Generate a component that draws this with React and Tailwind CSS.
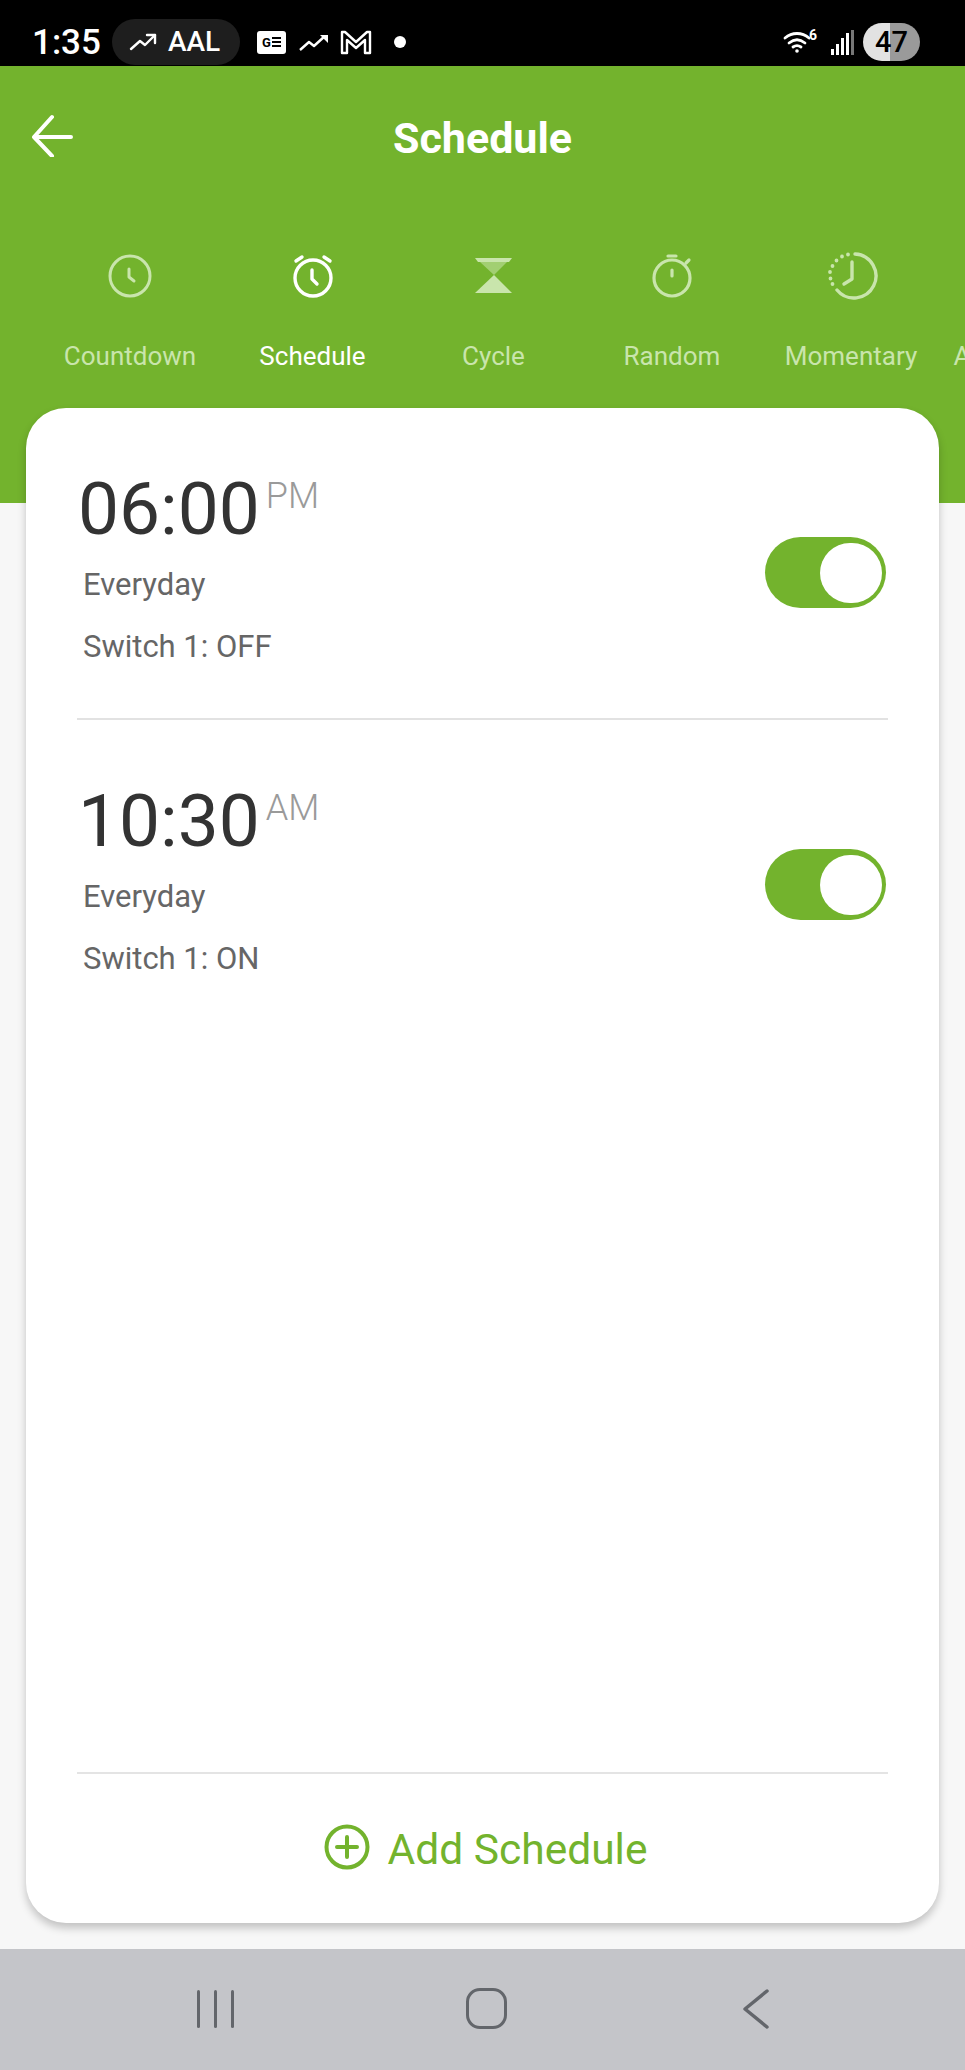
import React from 'react';

const FONT = { fontFamily: 'Roboto, "Noto Sans", sans-serif' };

const TABS = [
  { label: 'Countdown', w: 'w-[182px]', icon: 'clock' },
  { label: 'Schedule', w: 'w-[183px]', icon: 'alarm', active: true },
  { label: 'Cycle', w: 'w-[179px]', icon: 'hourglass' },
  { label: 'Random', w: 'w-[178px]', icon: 'stopwatch' },
  { label: 'Momentary', w: 'w-[180px]', icon: 'momentary' },
  { label: 'A', w: 'w-[18px] ml-[12px]', icon: null },
];

const SCHEDULES = [
  { time: '06:00', period: 'PM', days: 'Everyday', action: 'Switch 1: OFF' },
  { time: '10:30', period: 'AM', days: 'Everyday', action: 'Switch 1: ON' },
];

const TabIcon = ({ name }) => {
  if (name === 'clock') {
    return (
      <svg width="56" height="56" viewBox="0 0 56 56" fill="none" stroke="currentColor" strokeWidth="3" strokeLinecap="round" strokeLinejoin="round">
        <circle cx="28" cy="28" r="20" />
        <path d="M27 21v8l5 4" />
      </svg>
    );
  }
  if (name === 'alarm') {
    return (
      <svg width="56" height="56" viewBox="0 0 56 56" fill="none" stroke="currentColor" strokeWidth="3.4" strokeLinecap="round" strokeLinejoin="round">
        <circle cx="28" cy="30" r="18" />
        <path d="M27 22v9l5 5" />
        <path d="M11 13l6-4M45 13l-6-4" />
      </svg>
    );
  }
  if (name === 'hourglass') {
    return (
      <svg width="56" height="56" viewBox="0 0 56 56" fill="currentColor">
        <path d="M9 10h37l-3 4H12z" />
        <path d="M14 14h27L28 27z" opacity="0.55" />
        <path d="M28 27l18 18H9z" />
      </svg>
    );
  }
  if (name === 'stopwatch') {
    return (
      <svg width="56" height="56" viewBox="0 0 56 56" fill="none" stroke="currentColor" strokeWidth="3.2" strokeLinecap="round">
        <circle cx="28" cy="30" r="18" />
        <path d="M24 8h8M28 22v6M42 15l3-3" />
      </svg>
    );
  }
  if (name === 'momentary') {
    return (
      <svg width="56" height="56" viewBox="0 0 56 56" fill="none" stroke="currentColor" strokeWidth="3.4" strokeLinecap="round" strokeLinejoin="round">
        <path d="M32 6a22 22 0 1 1-18 36" />
        <path d="M29 14v17l-8 5" />
        <path d="M25 6.500h0M19 8.500h0M13.500 12.500h0M9.500 18h0M7 24h0M7.500 30.500h0M9.500 36h0" strokeWidth="3.8" />
      </svg>
    );
  }
  return <div className="h-[56px]" />;
};

const Toggle = () => (
  <div className="w-[121px] h-[71px] rounded-full bg-[#73b32d] flex items-center justify-end pr-[4px]">
    <div className="w-[62px] h-[60px] rounded-full bg-white" />
  </div>
);

const StatusBar = () => (
  <div className="h-[66px] pt-[18px] bg-black flex items-center text-white relative">
    <span className="ml-[32px] text-[35px] font-medium leading-none">1:35</span>
    <div className="ml-[11px] w-[128px] h-[46px] rounded-full bg-[#1e1e1e] flex items-center pl-[17px] gap-[11px]">
      <svg width="28" height="20" viewBox="0 0 28 20" fill="none" stroke="white" strokeWidth="2.4" strokeLinecap="round" strokeLinejoin="round">
        <path d="M2 17l9-8 5 4 10-10" />
        <path d="M18 3h8v8" />
      </svg>
      <span className="text-[28px] font-medium leading-none">AAL</span>
    </div>
    <div className="ml-[17px] w-[29px] h-[23px] rounded-[3px] bg-white flex items-center justify-center gap-[1px]">
      <span className="text-[13px] font-bold text-black leading-none">G</span>
      <div className="flex flex-col gap-[2px]">
        <div className="w-[9px] h-[2px] bg-black" />
        <div className="w-[9px] h-[2px] bg-black" />
        <div className="w-[9px] h-[2px] bg-black" />
      </div>
    </div>
    <svg className="ml-[13px]" width="30" height="20" viewBox="0 0 30 20" fill="none" stroke="white" strokeWidth="2.4" strokeLinejoin="round">
      <path d="M1 18l9-8 5 4 11-10" />
      <path d="M21 3h8v8" fill="white" stroke="none" />
    </svg>
    <svg className="ml-[11px]" width="32" height="26" viewBox="0 0 32 26" fill="none" stroke="white" strokeWidth="2.4" strokeLinejoin="round">
      <path d="M2 24V3h3l11 10L27 3h3v21h-5V11l-9 8-9-8v13z" />
    </svg>
    <div className="ml-[22px] w-[12px] h-[12px] rounded-full bg-white" />
    <div className="ml-auto mr-[45px] flex items-center">
      <svg width="36" height="30" viewBox="0 0 36 30" fill="none" stroke="white" strokeWidth="2.8" strokeLinecap="round">
        <path d="M2 11c7-6 17-6 24 0M6 16c5-4 11-4 16 0M10 20c3-2 5-2 8 0" />
        <circle cx="14" cy="24" r="1.800" fill="white" stroke="none" />
        <text x="26" y="13" fontSize="14" fontWeight="700" fill="white" stroke="none" fontFamily="Roboto">6</text>
      </svg>
      <div className="ml-[12px] flex items-end gap-[2px] h-[25px]">
        <div className="w-[3px] h-[6px] bg-white" />
        <div className="w-[3px] h-[11px] bg-white" />
        <div className="w-[3px] h-[17px] bg-white" />
        <div className="w-[3px] h-[22px] bg-white" />
        <div className="w-[3px] h-[25px] bg-[#777777]" />
      </div>
      <div className="ml-[9px] w-[57px] h-[38px] rounded-full bg-[linear-gradient(90deg,#e2e2e2_47%,#9a9a9a_47%)] flex items-center justify-center text-black text-[29px] font-medium leading-none">
        47
      </div>
    </div>
  </div>
);

const App = () => {
  return (
    <div className="w-[965px] h-[2070px] overflow-hidden bg-[#f7f7f7] flex flex-col" style={FONT}>
      <StatusBar />

      <div className="h-[437px] bg-[#73b32d] shrink-0 overflow-hidden">
        <div className="h-[142px] relative flex items-center justify-center pt-[3px]">
          <svg className="absolute left-[30px] top-[47px]" width="44" height="44" viewBox="0 0 44 44" fill="none" stroke="white" strokeWidth="4" strokeLinecap="round" strokeLinejoin="round">
            <path d="M5 24h36M22 4L4 24l18 19" />
          </svg>
          <span className="text-[43px] font-bold text-white leading-none">Schedule</span>
        </div>
        <div className="flex pl-[39px] w-[965px] mt-[40px]">
          {TABS.map(tab => (
            <div key={tab.label} className={`${tab.w} shrink-0 flex flex-col items-center ${tab.active ? 'text-white' : 'text-[#c9e5ac]'}`}>
              <TabIcon name={tab.icon} />
              <span className="mt-[37px] text-[26px] leading-[30px]">{tab.label}</span>
            </div>
          ))}
        </div>
      </div>

      <div className="mx-[26px] -mt-[95px] h-[1515px] shrink-0 relative rounded-[40px] bg-white shadow-[0_5px_9px_rgba(0,0,0,0.22)] flex flex-col px-[51px]">
        <div className="flex-1">
          {SCHEDULES.map((item, idx) => (
            <div key={item.time} className={`h-[312px] flex items-start justify-between ${idx === 0 ? 'border-b-2 border-[#e2e2e2]' : ''}`}>
              <div className="pt-[57px]">
                <div className="flex items-start h-[86px] pl-[1px]">
                  <span className="text-[73px] leading-[88px] text-[#333333]">{item.time}</span>
                  <span className="ml-[6px] mt-[10px] text-[36px] leading-[42px] font-light text-[#9a9a9a]">{item.period}</span>
                </div>
                <div className="pl-[6px] mt-[3px] text-[31px] leading-[62px] text-[#666666]">{item.days}</div>
                <div className="pl-[6px] text-[31px] leading-[62px] text-[#666666]">{item.action}</div>
              </div>
              <div className="mt-[129px] mr-[2px]">
                <Toggle />
              </div>
            </div>
          ))}
        </div>
        <div className="h-[151px] border-t-2 border-[#e4e4e4] flex items-center justify-center gap-[18px] pl-[6px] pt-[4px] text-[#73b32d]">
          <svg width="46" height="46" viewBox="0 0 46 46" fill="none" stroke="currentColor" strokeWidth="4" strokeLinecap="round" className="mb-[8px]">
            <circle cx="23" cy="23" r="20.500" />
            <path d="M23 13v20M13 23h20" />
          </svg>
          <span className="text-[42.500px] leading-none">Add Schedule</span>
        </div>
      </div>

      <div className="mt-[26px] flex-1 bg-[#c4c5c9] flex items-center text-[#63666b]">
        <div className="ml-[197px] flex gap-[14px] mb-[2px]">
          <div className="w-[3px] h-[38px] bg-[#63666b] rounded-full" />
          <div className="w-[3px] h-[38px] bg-[#63666b] rounded-full" />
          <div className="w-[3px] h-[38px] bg-[#63666b] rounded-full" />
        </div>
        <div className="ml-[232px] w-[41px] h-[41px] rounded-[14px] border-[3.5px] border-[#63666b] mb-[2px]" />
        <svg className="ml-[234px] mb-[2px]" width="30" height="42" viewBox="0 0 30 42" fill="none" stroke="currentColor" strokeWidth="3.5" strokeLinecap="round" strokeLinejoin="round">
          <path d="M26 3L4 21l22 18" />
        </svg>
      </div>
    </div>
  );
};

export default App;
